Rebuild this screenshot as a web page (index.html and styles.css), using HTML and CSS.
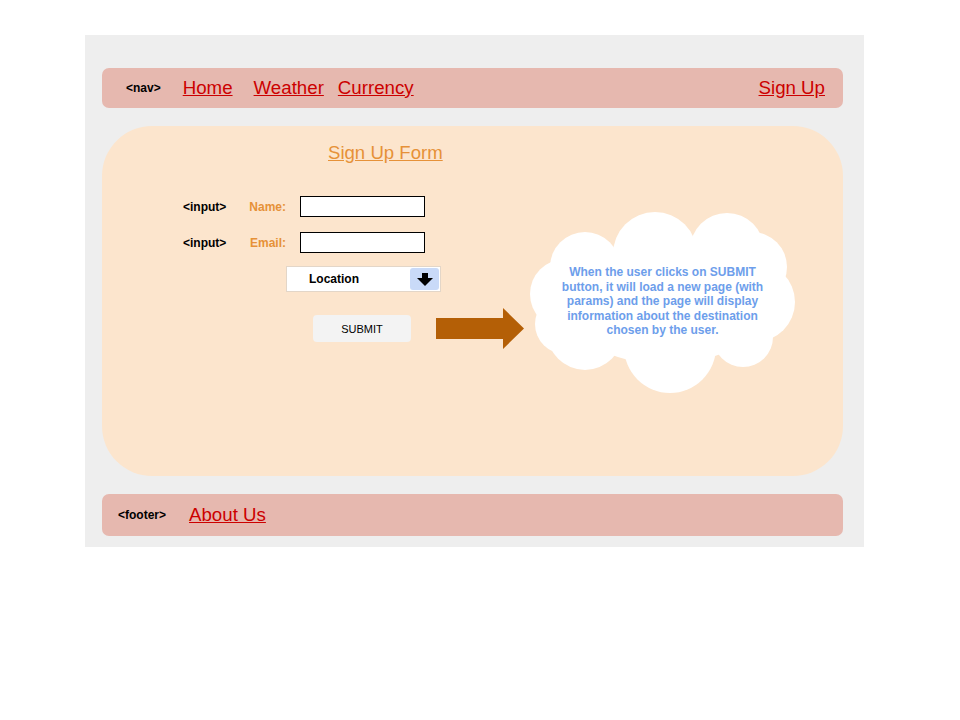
FILE: index.html
```html
<!DOCTYPE html>
<html>
<head>
<meta charset="utf-8">
<link rel="stylesheet" href="styles.css">
</head>
<body>
<div class="page">
  <nav class="bar nav">
    <span class="tag">&lt;nav&gt;</span>
    <a class="link home" href="#">Home</a>
    <a class="link weather" href="#">Weather</a>
    <a class="link currency" href="#">Currency</a>
    <a class="link signup" href="#">Sign Up</a>
  </nav>
  <main class="main">
    <a class="title" href="#">Sign Up Form</a>
    <div class="content">
      <div class="form">
        <div class="row">
          <span class="tag itag">&lt;input&gt;</span>
          <span class="label">Name:</span>
          <span class="input"></span>
        </div>
        <div class="row">
          <span class="tag itag">&lt;input&gt;</span>
          <span class="label">Email:</span>
          <span class="input"></span>
        </div>
        <div class="select">
          <span class="select-text">Location</span>
          <span class="select-btn">
            <svg width="16" height="13" viewBox="0 0 16 13"><path d="M5 0 H11 V5 H16 L8 13 L0 5 H5 Z" fill="#000"/></svg>
          </span>
        </div>
        <div class="submit">SUBMIT</div>
      </div>
      <svg class="arrow" width="88" height="41" viewBox="0 0 88 41"><polygon points="0,10 67,10 67,0 88,20.5 67,41 67,31 0,31" fill="#b45f06"/></svg>
      <div class="cloud">
        <svg class="cloud-shape" width="265" height="182" viewBox="0 0 265 182">
          <g fill="#ffffff">
            <ellipse cx="135" cy="92" rx="100" ry="60"/>
            <circle cx="55" cy="55" r="35"/>
            <circle cx="125" cy="42" r="42"/>
            <circle cx="197" cy="38" r="37"/>
            <circle cx="222" cy="55" r="35"/>
            <circle cx="225" cy="90" r="40"/>
            <circle cx="213" cy="125" r="30"/>
            <circle cx="140" cy="135" r="46"/>
            <circle cx="55" cy="120" r="38"/>
            <circle cx="35" cy="82" r="35"/>
            <circle cx="35" cy="112" r="30"/>
          </g>
        </svg>
        <p class="cloud-text">When the user clicks on SUBMIT<br>button, it will load a new page (with<br>params) and the page will display<br>information about the destination<br>chosen by the user.</p>
      </div>
    </div>
  </main>
  <footer class="bar footer">
    <span class="tag">&lt;footer&gt;</span>
    <a class="link about" href="#">About Us</a>
  </footer>
</div>
</body>
</html>
```

FILE: styles.css
```css
* { box-sizing: border-box; }
body {
  margin: 0;
  background: #ffffff;
  font-family: "Liberation Sans", Arial, sans-serif;
}
.page {
  margin: 35px 0 0 85px;
  width: 779px;
  height: 512px;
  background: #eeeeee;
  padding: 33px 21px 11px 17px;
}
.bar {
  display: flex;
  align-items: center;
  background: #e6b8af;
  border-radius: 7px;
}
.nav {
  height: 40px;
  padding: 0 18px 0 24px;
}
.tag {
  font-size: 12px;
  font-weight: bold;
  color: #000;
}
.link {
  font-size: 18.7px;
  color: #cc0000;
  text-decoration: underline;
}
.home { margin-left: 22px; }
.weather { margin-left: 21px; }
.currency { margin-left: 14px; }
.signup { margin-left: auto; }
.main {
  margin-top: 18px;
  height: 350px;
  background: #fce5cd;
  border-radius: 50px;
  padding: 16px 0 0 81px;
  display: flex;
  flex-direction: column;
  align-items: flex-start;
}
.title {
  margin-left: 145px;
  font-size: 18.6px;
  line-height: 22px;
  color: #e69138;
  text-decoration: underline;
}
.content {
  display: flex;
  align-items: flex-start;
  margin-top: 32px;
}
.form {
  width: 258px;
  display: flex;
  flex-direction: column;
  align-items: flex-start;
}
.row {
  display: flex;
  align-items: center;
  height: 21px;
  margin-bottom: 15px;
}
.itag { width: 43px; }
.label {
  width: 60px;
  text-align: right;
  font-size: 12px;
  font-weight: bold;
  color: #e69138;
}
.input {
  margin-left: 14px;
  width: 125px;
  height: 21px;
  background: #fff;
  border: 1px solid #000;
}
.select {
  margin-top: -2px;
  margin-left: 103px;
  width: 155px;
  height: 26px;
  background: #fff;
  border: 1px solid #e3d6c8;
  display: flex;
  align-items: center;
  padding: 0 1px 0 22px;
}
.select-text {
  font-size: 12px;
  font-weight: bold;
  color: #000;
}
.select-btn {
  margin-left: auto;
  width: 29px;
  height: 22px;
  background: #c9daf8;
  border-radius: 3px;
  display: flex;
  align-items: center;
  justify-content: center;
}
.submit {
  margin-top: 23px;
  margin-left: 130px;
  width: 98px;
  height: 27px;
  background: #f3f3f3;
  border-radius: 4px;
  font-size: 11px;
  color: #000;
  display: flex;
  align-items: center;
  justify-content: center;
}
.arrow {
  display: block;
  margin-left: -5px;
  margin-top: 112px;
}
.cloud {
  position: relative;
  margin-left: 6px;
  margin-top: 16px;
  width: 265px;
  height: 182px;
}
.cloud-shape {
  position: absolute;
  left: 0;
  top: 0;
}
.cloud-text {
  position: relative;
  margin: 0;
  padding-top: 53px;
  text-align: center;
  font-size: 12px;
  line-height: 14.5px;
  font-weight: bold;
  color: #6d9eeb;
}
.footer {
  margin-top: 18px;
  height: 42px;
  padding-left: 16px;
}
.about { margin-left: 23px; }
```
